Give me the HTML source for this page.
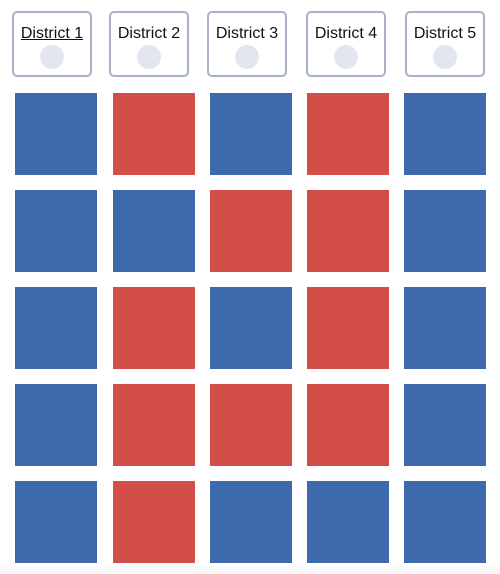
<!DOCTYPE html><html><head><style>
body{margin:0;width:500px;height:574px;background:#fff;position:relative;overflow:hidden;font-family:"Liberation Sans",sans-serif}
.c{position:absolute;top:11px;width:76px;height:62px;border:2px solid #a8b4c6;border-radius:5px;text-align:center;box-sizing:content-box}
.c span{display:block;margin-top:12px;font-size:16px;color:#111;line-height:18px}
.c i{position:absolute;left:26px;top:32px;width:24px;height:24px;border-radius:50%;background:#e2e7ef}
.s{position:absolute;width:82px;height:82px}
.b{background:#3d6aad}.r{background:#d34e48}
.f{position:absolute;left:0;top:566px;width:500px;height:8px;background:#fafafa}
</style></head><body>
<div class="c" style="left:12px"><span style="text-decoration:underline">District 1</span><i></i></div>
<div class="c" style="left:109px"><span>District 2</span><i></i></div>
<div class="c" style="left:207px"><span>District 3</span><i></i></div>
<div class="c" style="left:306px"><span>District 4</span><i></i></div>
<div class="c" style="left:405px"><span>District 5</span><i></i></div>
<div id="g"></div>
<div class="f"></div>
<script>
var rows=["BRBRB","BBRRB","BRBRB","BRRRB","BRBBB"],xs=[15,113,210,307,404],h="";
for(var r=0;r<5;r++)for(var c=0;c<5;c++)h+='<div class="s '+(rows[r][c]=="B"?"b":"r")+'" style="left:'+xs[c]+'px;top:'+(93+97*r)+'px"></div>';
document.getElementById("g").innerHTML=h;
</script>
</body></html>
